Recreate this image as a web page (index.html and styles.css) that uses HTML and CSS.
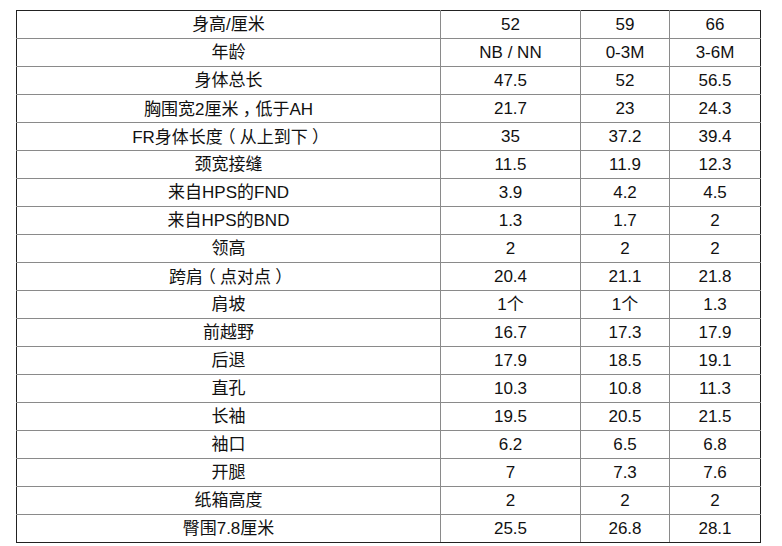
FILE: index.html
```html
<!DOCTYPE html>
<html lang="zh">
<head>
<meta charset="utf-8">
<title>尺码表</title>
<link rel="stylesheet" href="styles.css">
</head>
<body>
<table class="size-table">
  <colgroup>
    <col class="c-name">
    <col class="c-a">
    <col class="c-b">
    <col class="c-c">
  </colgroup>
  <tbody>
    <tr><td>身高/厘米</td><td>52</td><td>59</td><td>66</td></tr>
    <tr><td>年龄</td><td>NB / NN</td><td>0-3M</td><td>3-6M</td></tr>
    <tr><td>身体总长</td><td>47.5</td><td>52</td><td>56.5</td></tr>
    <tr><td>胸围宽2厘米<span class="fw">，</span>低于AH</td><td>21.7</td><td>23</td><td>24.3</td></tr>
    <tr><td>FR身体长度<span class="fw">（</span>从上到下<span class="fw">）</span></td><td>35</td><td>37.2</td><td>39.4</td></tr>
    <tr><td>颈宽接缝</td><td>11.5</td><td>11.9</td><td>12.3</td></tr>
    <tr><td>来自HPS的FND</td><td>3.9</td><td>4.2</td><td>4.5</td></tr>
    <tr><td>来自HPS的BND</td><td>1.3</td><td>1.7</td><td>2</td></tr>
    <tr><td>领高</td><td>2</td><td>2</td><td>2</td></tr>
    <tr><td>跨肩<span class="fw">（</span>点对点<span class="fw">）</span></td><td>20.4</td><td>21.1</td><td>21.8</td></tr>
    <tr><td>肩坡</td><td>1个</td><td>1个</td><td>1.3</td></tr>
    <tr><td>前越野</td><td>16.7</td><td>17.3</td><td>17.9</td></tr>
    <tr><td>后退</td><td>17.9</td><td>18.5</td><td>19.1</td></tr>
    <tr><td>直孔</td><td>10.3</td><td>10.8</td><td>11.3</td></tr>
    <tr><td>长袖</td><td>19.5</td><td>20.5</td><td>21.5</td></tr>
    <tr><td>袖口</td><td>6.2</td><td>6.5</td><td>6.8</td></tr>
    <tr><td>开腿</td><td>7</td><td>7.3</td><td>7.6</td></tr>
    <tr><td>纸箱高度</td><td>2</td><td>2</td><td>2</td></tr>
    <tr><td>臀围7.8厘米</td><td>25.5</td><td>26.8</td><td>28.1</td></tr>
  </tbody>
</table>
</body>
</html>
```
FILE: styles.css
```css
html, body {
  margin: 0;
  padding: 0;
  background: #ffffff;
}

body {
  font-family: "Liberation Sans", "Noto Sans CJK SC", sans-serif;
  font-size: 17px;
  color: #111111;
}

.size-table {
  margin: 10px 0 0 16px;
  border-collapse: collapse;
  table-layout: fixed;
  width: 744px;
  border: 1px solid #222222;
}

.c-name { width: 424px; }
.c-a { width: 140px; }
.c-b { width: 89px; }
.c-c { width: 91px; }

.size-table td {
  border: 1px solid #8a8a8a;
  height: 27px;
  padding: 0;
  text-align: center;
  vertical-align: middle;
  line-height: 20px;
  white-space: nowrap;
}

.size-table tr:first-child td { border-top-color: #222222; }
.size-table tr:last-child td { border-bottom-color: #222222; }
.size-table td:first-child { border-left-color: #222222; }
.size-table td:last-child { border-right-color: #222222; }

.fw {
  display: inline-block;
  width: 1em;
  text-align: center;
  font-family: "Noto Sans CJK SC", sans-serif;
  font-feature-settings: "halt" 1;
}
```
